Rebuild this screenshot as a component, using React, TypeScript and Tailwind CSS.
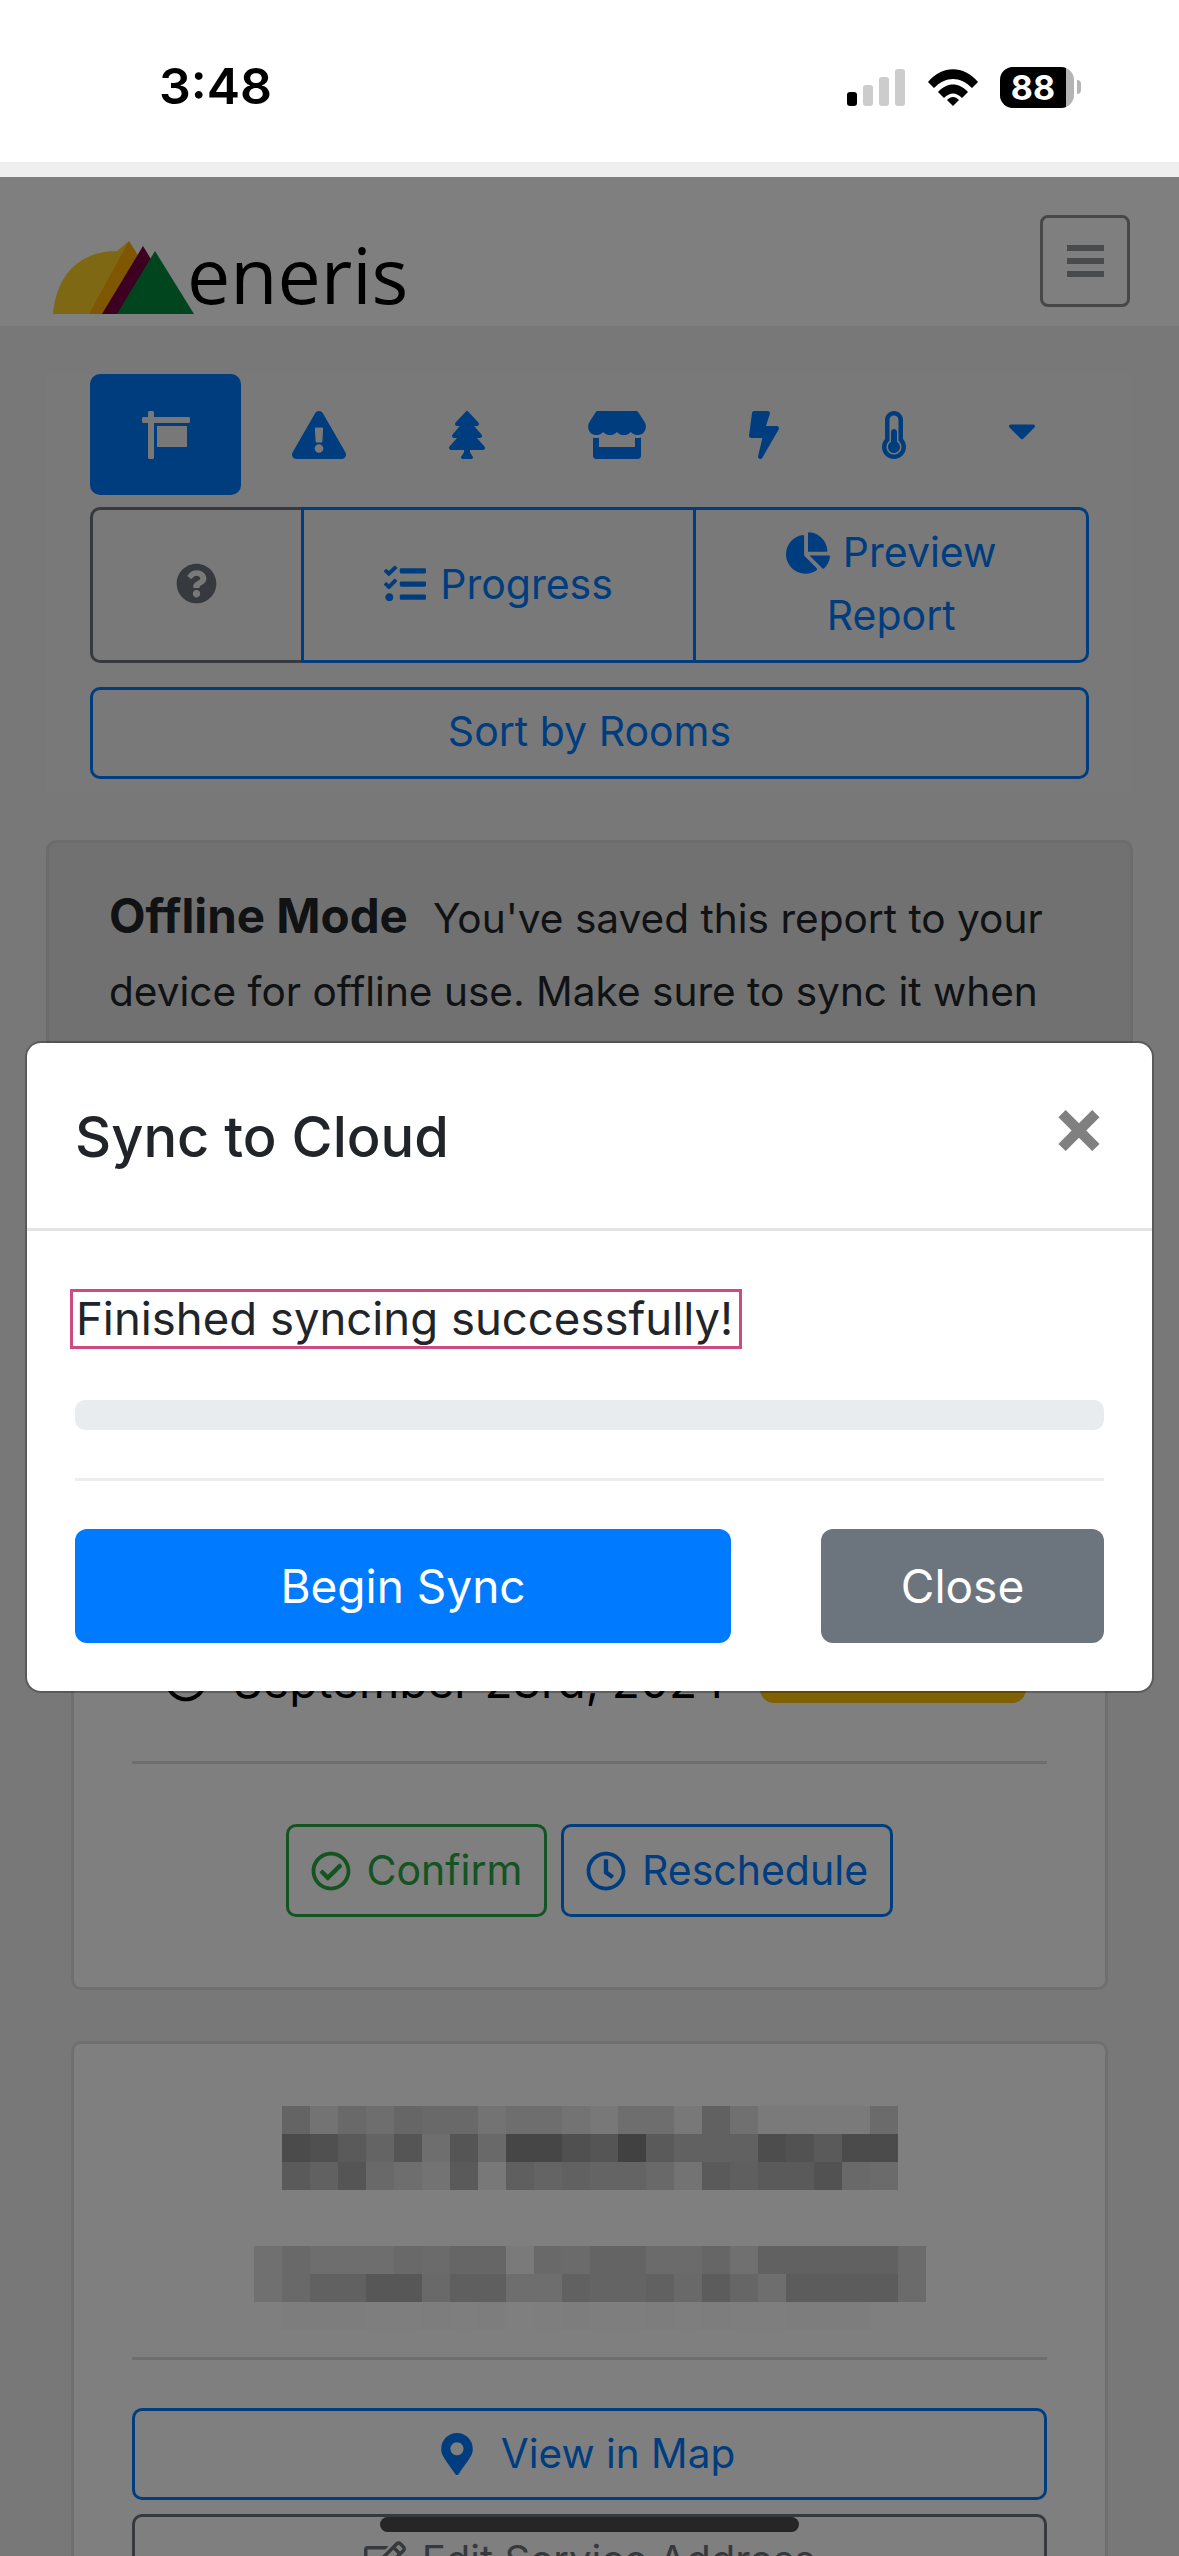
import {
  FaBolt,
  FaCaretDown,
  FaChartPie,
  FaExclamationTriangle,
  FaMapMarkerAlt,
  FaQuestionCircle,
  FaRegCheckCircle,
  FaRegClock,
  FaRegEdit,
  FaSign,
  FaStore,
  FaTasks,
  FaThermometerHalf,
  FaTree,
} from "react-icons/fa";

// grey values of the pixelated (redacted) address lines
const NAME_BLUR = [
  [0xc8, 0xe6, 0xd2, 0xdc, 0xcd, 0xd2, 0xd2, 0xe6, 0xdc, 0xdc, 0xe6, 0xf0, 0xdc, 0xdc, 0xf0, 0xc3, 0xe1, 0xf5, 0xf5, 0xf5, 0xf5, 0xd7],
  [0x96, 0xa0, 0xb4, 0xc8, 0xaa, 0xdc, 0xaa, 0xd2, 0x8c, 0x8c, 0xa0, 0xaa, 0x82, 0xb4, 0xc3, 0xc3, 0xc3, 0x9b, 0xa5, 0xb4, 0x96, 0x96],
  [0xb4, 0xc3, 0xaa, 0xd2, 0xdc, 0xe6, 0xb4, 0xf0, 0xbe, 0xc8, 0xc3, 0xc8, 0xc8, 0xd2, 0xe6, 0xb4, 0xbe, 0xb4, 0xb4, 0xa5, 0xd2, 0xd7],
];
const ADDRESS_BLUR = [
  [0xe1, 0xd2, 0xdc, 0xdc, 0xdc, 0xd2, 0xd7, 0xcd, 0xcd, 0xf5, 0xd2, 0xd7, 0xc8, 0xc8, 0xd7, 0xd7, 0xcd, 0xe1, 0xc3, 0xc3, 0xc3, 0xc3, 0xc3, 0xd7],
  [0xe1, 0xd2, 0xc3, 0xc3, 0xaf, 0xaf, 0xd2, 0xbe, 0xbe, 0xdc, 0xdc, 0xc3, 0xc8, 0xc8, 0xc3, 0xd2, 0xb9, 0xcd, 0xdc, 0xb9, 0xb9, 0xb9, 0xb9, 0xd7],
  [0xff, 0xfa, 0xfa, 0xfa, 0xfc, 0xfc, 0xfa, 0xfc, 0xfa, 0xff, 0xfc, 0xfa, 0xfc, 0xfc, 0xfa, 0xfc, 0xfa, 0xfc, 0xfc, 0xfa, 0xfa, 0xfa, 0xff, 0xff],
];

const Mosaic = ({ rows, cell }: { rows: number[][]; cell: number }) => (
  <div className="flex flex-col">
    {rows.map((row, y) => (
      <div key={y} className="flex">
        {row.map((grey, x) => (
          <div
            key={x}
            style={{
              width: 28,
              height: cell,
              backgroundColor: `rgb(${grey},${grey},${grey})`,
            }}
          />
        ))}
      </div>
    ))}
  </div>
);

const StatusBar = () => (
  <div className="flex h-[162px] items-start justify-between bg-white pl-[159px] pr-[98px] pt-[55px]">
    <span className="text-[50px] font-semibold leading-[63px] text-black">3:48</span>
    <div className="flex items-start pt-[12px]">
      <svg width="58" height="37" viewBox="0 0 58 37" className="mt-[2px]">
        <rect x="0" y="23" width="10" height="14" rx="3" fill="#000" />
        <rect x="16" y="16" width="10" height="21" rx="3" fill="#ccc" />
        <rect x="32" y="8" width="10" height="29" rx="3" fill="#ccc" />
        <rect x="48" y="0" width="10" height="37" rx="3" fill="#ccc" />
      </svg>
      <svg width="50" height="37" viewBox="0 0 50 37" className="ml-[23px] mt-[2px]">
        <path d="M0 13 C14 -4 36 -4 50 13 L44 19 C32 7 18 7 6 19 Z" fill="#000" />
        <path d="M10 23 C19 13 31 13 40 23 L34 29 C28 23 22 23 16 29 Z" fill="#000" />
        <path d="M19 31 C23 27 27 27 31 31 L25 37 Z" fill="#000" />
      </svg>
      <div className="ml-[22px] flex h-[41px] w-[74px] overflow-hidden rounded-[13px] bg-[#b4b4b4]">
        <div className="flex w-[66px] items-center justify-center bg-black text-[34px] font-bold leading-none text-white">
          88
        </div>
      </div>
      <div className="ml-[3px] mt-[13px] h-[14px] w-[4px] rounded-r-full bg-[#b4b4b4]" />
    </div>
  </div>
);

const Logo = () => (
  <div className="flex items-end">
    <svg width="144" height="74" viewBox="0 0 144 74">
      <path d="M0 73 C4 30 30 10 64 10 L76 0 L102 40 L70 73 Z" fill="#ffc800" opacity="0.85" />
      <path d="M36 73 L76 0 L96 34 L66 73 Z" fill="#ffa500" opacity="0.8" />
      <path d="M49 73 L90 5 L116 48 L90 73 Z" fill="#7a0040" />
      <path d="M64 73 L102 10 L141 73 Z" fill="#008a3c" />
    </svg>
    <span className="-ml-[10px] mb-[1px] font-['Open_Sans',sans-serif] text-[77px] leading-[78px] text-black">
      eneris
    </span>
  </div>
);

const App = () => {
  return (
    <div className="relative flex h-[2556px] w-full flex-col overflow-hidden bg-white font-['Inter',sans-serif]">
      <StatusBar />
      <div className="h-[15px] bg-[#efefef]" />

      <div className="relative flex-1 overflow-hidden bg-[#f1f1f1] text-[#212529]">
        {/* navbar */}
        <div className="flex h-[149px] items-start justify-between bg-white pl-[53px] pr-[49px] pt-[38px]">
          <div className="pt-[21px]">
            <Logo />
          </div>
          <button
            type="button"
            className="flex h-[92px] w-[90px] items-center justify-center rounded-[8px] border-[3px] border-[#8c8e90]"
          >
            <div className="flex w-[37px] flex-col gap-[7px]">
              <span className="h-[6px] bg-[#929598]" />
              <span className="h-[6px] bg-[#929598]" />
              <span className="h-[6px] bg-[#929598]" />
            </div>
          </button>
        </div>

        {/* report tabs */}
        <div className="mx-[46px] mt-[48px] flex flex-col bg-[#f3f3f3] px-[44px]">
          <div className="flex h-[121px] text-[#007bff]">
            <div className="flex h-[121px] w-[151px] items-start justify-center rounded-[10px] bg-[#007bff] pt-[37px] text-[#f1f1f1]">
              <FaSign size={48} />
            </div>
            <div className="ml-[51px] flex w-[54px] justify-center pt-[37px]">
              <FaExclamationTriangle className="h-[48px] w-[54px]" />
            </div>
            <div className="ml-[102px] flex w-[38px] justify-center pt-[37px]">
              <FaTree size={48} />
            </div>
            <div className="ml-[102px] flex w-[58px] justify-center pt-[37px]">
              <FaStore className="h-[48px] w-[58px]" />
            </div>
            <div className="ml-[102px] flex w-[32px] justify-center pt-[37px]">
              <FaBolt size={48} />
            </div>
            <div className="ml-[102px] flex w-[24px] justify-center pt-[37px]">
              <FaThermometerHalf size={48} />
            </div>
            <div className="ml-[102px] flex w-[28px] justify-center pt-[32px]">
              <FaCaretDown size={48} />
            </div>
          </div>

          <div className="mt-[12px] flex h-[156px] text-[41px] leading-[63px] text-[#007bff]">
            <button
              type="button"
              className="flex w-[214px] items-center justify-center rounded-l-[10px] border-[3px] border-[#6c757d] pb-[3px] text-[#6c757d]"
            >
              <FaQuestionCircle size={41} />
            </button>
            <button
              type="button"
              className="-ml-[3px] flex w-[396px] items-center justify-center gap-[14px] border-[3px] border-[#007bff] pb-[2px]"
            >
              <FaTasks size={42} />
              <span>Progress</span>
            </button>
            <button
              type="button"
              className="-ml-[3px] flex w-[396px] flex-col items-center justify-center rounded-r-[10px] border-[3px] border-[#007bff] pb-[2px]"
            >
              <span className="flex items-center gap-[13px]">
                <FaChartPie size={44} />
                Preview
              </span>
              <span>Report</span>
            </button>
          </div>

          <button
            type="button"
            className="mb-[12px] mt-[24px] h-[92px] w-[999px] rounded-[10px] border-[3px] border-[#007bff] pb-[2px] text-[41px] text-[#007bff]"
          >
            Sort by Rooms
          </button>
        </div>

        {/* offline notice */}
        <div className="mx-[46px] mt-[49px] h-[280px] rounded-[10px] border-[3px] border-[#d6d8db] bg-[#e2e3e5] pl-[60px] pr-[40px] pt-[36px] text-[40.6px] leading-[73px]">
          <strong className="mr-[25px] text-[47.5px] font-bold">Offline Mode</strong>
          You've saved this report to your device for offline use. Make sure to sync it when you're back online.
        </div>

        {/* schedule card */}
        <div className="mx-[71px] mt-[30px] flex h-[840px] flex-col rounded-[10px] border-[3px] border-[#dfdfdf] bg-white px-[58px] pt-[486px]">
          <div className="flex h-[64px] items-center">
            <FaRegClock size={42} className="ml-[33px] mt-[20px] text-black" />
            <span className="ml-[26px] mt-[20px] text-[46px] text-black">September 23rd, 2024</span>
            <span className="ml-[34px] h-[64px] w-[266px] rounded-[14px] bg-[#ffc107]" />
          </div>
          <div className="mt-[58px] h-[3px] bg-[#dcdcdc]" />
          <div className="mt-[60px] flex justify-center gap-[14px] text-[41px]">
            <button
              type="button"
              className="flex h-[93px] w-[261px] items-center justify-center gap-[16px] rounded-[10px] border-[3px] border-[#28a745] text-[#28a745]"
            >
              <FaRegCheckCircle size={40} />
              Confirm
            </button>
            <button
              type="button"
              className="flex h-[93px] w-[332px] items-center justify-center gap-[16px] rounded-[10px] border-[3px] border-[#007bff] text-[#007bff]"
            >
              <FaRegClock size={40} />
              Reschedule
            </button>
          </div>
        </div>

        {/* service address card */}
        <div className="mx-[71px] mt-[51px] flex h-[600px] flex-col items-stretch rounded-[10px] border-[3px] border-[#dfdfdf] bg-white px-[58px] pt-[62px]">
          <div className="flex justify-center">
            <Mosaic rows={NAME_BLUR} cell={28} />
          </div>
          <div className="mt-[56px] flex justify-center">
            <Mosaic rows={ADDRESS_BLUR} cell={28} />
          </div>
          <div className="mt-[27px] h-[3px] bg-[#dcdcdc]" />
          <button
            type="button"
            className="mt-[48px] flex h-[92px] items-center justify-center gap-[23px] rounded-[10px] border-[3px] border-[#007bff] pr-[8px] text-[40.5px] text-[#007bff]"
          >
            <FaMapMarkerAlt size={42} />
            View in Map
          </button>
          <button
            type="button"
            className="mt-[14px] flex h-[92px] items-center justify-center gap-[16px] rounded-[10px] border-[3px] border-[#6c757d] text-[40px] text-[#6c757d]"
          >
            <FaRegEdit size={42} />
            Edit Service Address
          </button>
        </div>

        {/* modal backdrop */}
        <div className="absolute inset-0 bg-black/50" />

        {/* sync modal */}
        <div className="absolute left-[27px] top-[866px] w-[1125px] rounded-[14px] bg-white shadow-[0_0_0_2px_rgba(0,0,0,0.25)]">
          <div className="flex h-[188px] items-start justify-between border-b-[3px] border-[#e4e4e4] pl-[48px] pr-[46px]">
            <h5 className="mt-[58px] text-[56px] font-medium leading-[72px] text-[#212529]">Sync to Cloud</h5>
            <span className="mt-[40px] text-[80px] font-bold leading-[84px] text-[#808080]">×</span>
          </div>
          <div className="flex flex-col px-[48px] pt-[58px]">
            <div className="-ml-[5px] flex h-[60px] w-[672px] items-center whitespace-nowrap border-[3px] border-[#cf4a80] pl-[3px] text-[45.5px] text-[#212529]">
              Finished syncing successfully!
            </div>
            <div className="mt-[51px] h-[30px] rounded-[10px] bg-[#e9ecef]" />
            <div className="mt-[48px] h-[3px] bg-[#eeeeee]" />
            <div className="mb-[48px] mt-[48px] flex justify-between text-[46px] text-white">
              <button type="button" className="h-[114px] w-[656px] rounded-[12px] bg-[#007bff]">
                Begin Sync
              </button>
              <button type="button" className="h-[114px] w-[283px] rounded-[12px] bg-[#6c757d]">
                Close
              </button>
            </div>
          </div>
        </div>

        {/* home indicator */}
        <div className="absolute left-[380px] top-[2340px] h-[15px] w-[419px] rounded-full bg-[#262626]" />
      </div>
    </div>
  );
};

export default App;
